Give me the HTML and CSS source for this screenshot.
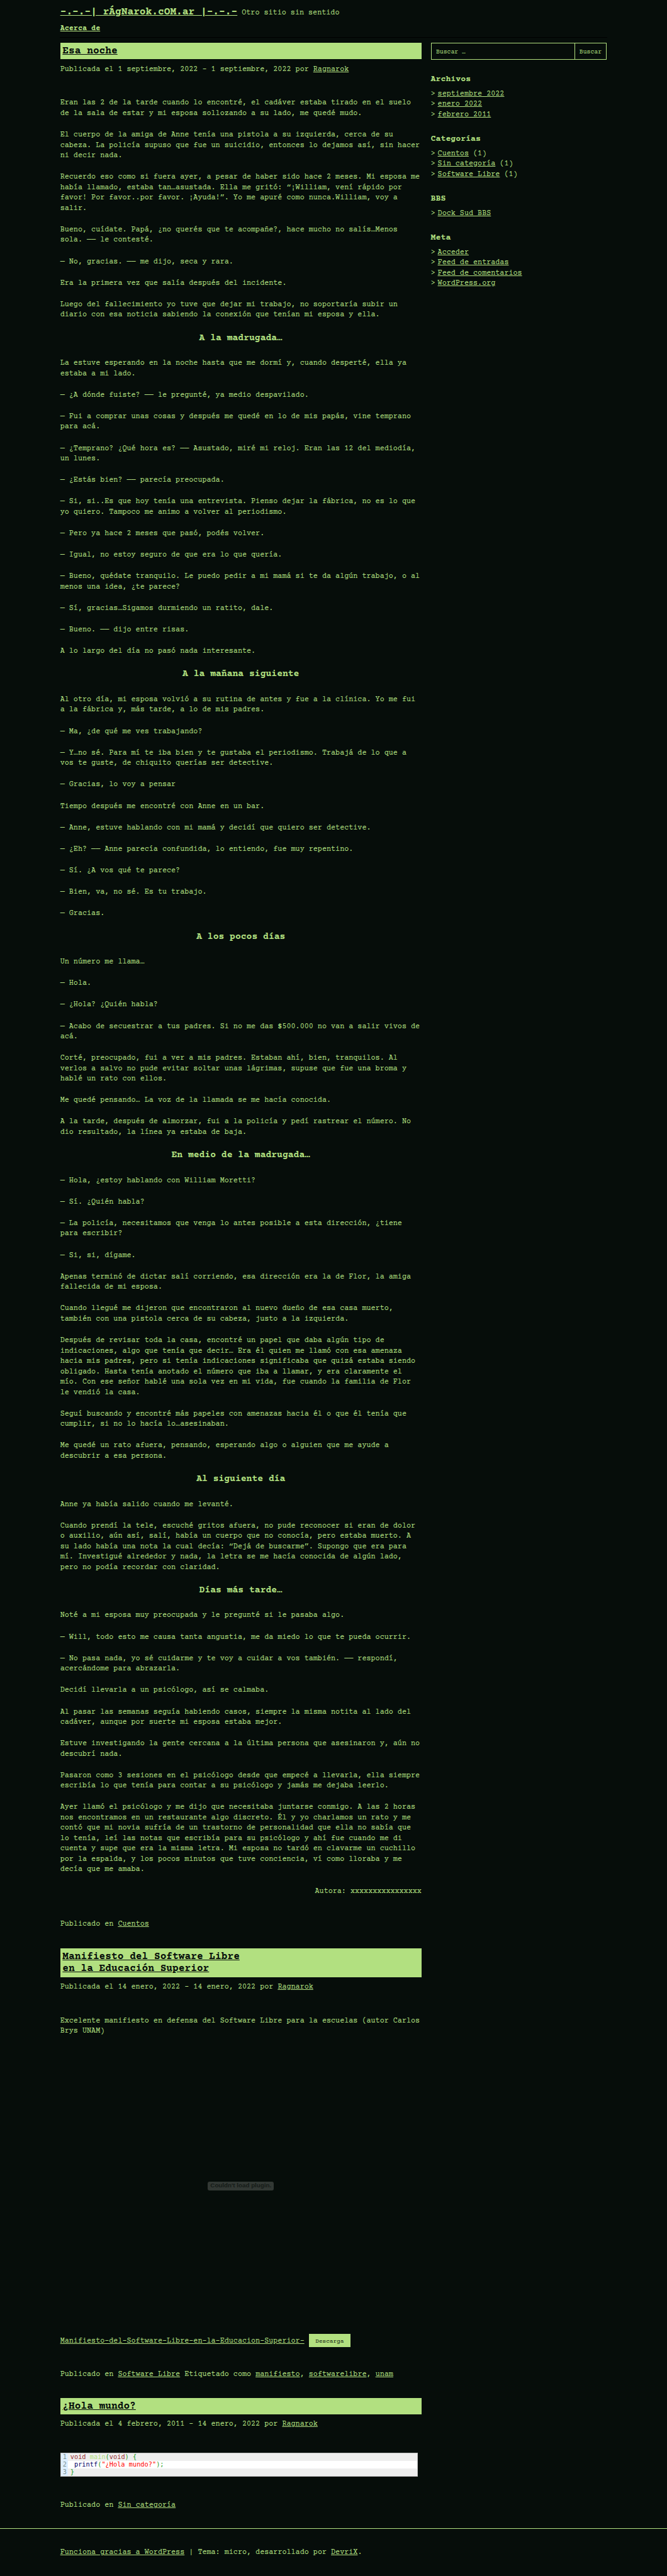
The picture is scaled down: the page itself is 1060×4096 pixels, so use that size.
FILE: index.html
```html
<!DOCTYPE html>
<html lang="es">
<head>
<meta charset="utf-8">
<title>-.-.-| rÁgNarok.cOM.ar |-.-.-</title>
<link rel="stylesheet" href="styles.css">
</head>
<body>
<header class="site-header">
<div class="branding"><a class="site-title" href="#">-.-.-| rÁgNarok.cOM.ar |-.-.-</a> <span>Otro sitio sin sentido</span></div>
<nav class="site-nav"><a href="#">Acerca de</a></nav>
</header>
<div class="site-content">
<main class="posts">
<article class="post">
<h2 class="post-title"><a href="#">Esa noche</a></h2>
<div class="post-meta">Publicada el 1 septiembre, 2022 – 1 septiembre, 2022 por <a href="#">Ragnarok</a></div>
<div class="post-body">
<p>Eran las 2 de la tarde cuando lo encontré, el cadáver estaba tirado en el suelo<br>de la sala de estar y mi esposa sollozando a su lado, me quedé mudo.</p>
<p>El cuerpo de la amiga de Anne tenía una pistola a su izquierda, cerca de su<br>cabeza. La policía supuso que fue un suicidio, entonces lo dejamos así, sin hacer<br>ni decir nada.</p>
<p>Recuerdo eso como si fuera ayer, a pesar de haber sido hace 2 meses. Mi esposa me<br>había llamado, estaba tan…asustada. Ella me gritó: “¡William, vení rápido por<br>favor! Por favor..por favor. ¡Ayuda!”. Yo me apuré como nunca.William, voy a<br>salir.</p>
<p>Bueno, cuídate. Papá, ¿no querés que te acompañe?, hace mucho no salís…Menos<br>sola. —— le contesté.</p>
<p>— No, gracias. —— me dijo, seca y rara.</p>
<p>Era la primera vez que salía después del incidente.</p>
<p>Luego del fallecimiento yo tuve que dejar mi trabajo, no soportaría subir un<br>diario con esa noticia sabiendo la conexión que tenían mi esposa y ella.</p>
<h3>A la madrugada…</h3>
<p>La estuve esperando en la noche hasta que me dormí y, cuando desperté, ella ya<br>estaba a mi lado.</p>
<p>— ¿A dónde fuiste? —— le pregunté, ya medio despavilado.</p>
<p>— Fui a comprar unas cosas y después me quedé en lo de mis papás, vine temprano<br>para acá.</p>
<p>— ¿Temprano? ¿Qué hora es? —— Asustado, miré mi reloj. Eran las 12 del mediodía,<br>un lunes.</p>
<p>— ¿Estás bien? —— parecía preocupada.</p>
<p>— Si, si..Es que hoy tenía una entrevista. Pienso dejar la fábrica, no es lo que<br>yo quiero. Tampoco me animo a volver al periodismo.</p>
<p>— Pero ya hace 2 meses que pasó, podés volver.</p>
<p>— Igual, no estoy seguro de que era lo que quería.</p>
<p>— Bueno, quédate tranquilo. Le puedo pedir a mi mamá si te da algún trabajo, o al<br>menos una idea, ¿te parece?</p>
<p>— Sí, gracias…Sigamos durmiendo un ratito, dale.</p>
<p>— Bueno. —— dijo entre risas.</p>
<p>A lo largo del día no pasó nada interesante.</p>
<h3>A la mañana siguiente</h3>
<p>Al otro día, mi esposa volvió a su rutina de antes y fue a la clínica. Yo me fui<br>a la fábrica y, más tarde, a lo de mis padres.</p>
<p>— Ma, ¿de qué me ves trabajando?</p>
<p>— Y…no sé. Para mí te iba bien y te gustaba el periodismo. Trabajá de lo que a<br>vos te guste, de chiquito querías ser detective.</p>
<p>— Gracias, lo voy a pensar</p>
<p>Tiempo después me encontré con Anne en un bar.</p>
<p>— Anne, estuve hablando con mi mamá y decidí que quiero ser detective.</p>
<p>— ¿Eh? —— Anne parecía confundida, lo entiendo, fue muy repentino.</p>
<p>— Sí. ¿A vos qué te parece?</p>
<p>— Bien, va, no sé. Es tu trabajo.</p>
<p>— Gracias.</p>
<h3>A los pocos días</h3>
<p>Un número me llama…</p>
<p>— Hola.</p>
<p>— ¿Hola? ¿Quién habla?</p>
<p>— Acabo de secuestrar a tus padres. Si no me das $500.000 no van a salir vivos de<br>acá.</p>
<p>Corté, preocupado, fui a ver a mis padres. Estaban ahí, bien, tranquilos. Al<br>verlos a salvo no pude evitar soltar unas lágrimas, supuse que fue una broma y<br>hablé un rato con ellos.</p>
<p>Me quedé pensando… La voz de la llamada se me hacía conocida.</p>
<p>A la tarde, después de almorzar, fui a la policía y pedí rastrear el número. No<br>dio resultado, la línea ya estaba de baja.</p>
<h3>En medio de la madrugada…</h3>
<p>— Hola, ¿estoy hablando con William Moretti?</p>
<p>— Sí. ¿Quién habla?</p>
<p>— La policía, necesitamos que venga lo antes posible a esta dirección, ¿tiene<br>para escribir?</p>
<p>— Si, si, dígame.</p>
<p>Apenas terminó de dictar salí corriendo, esa dirección era la de Flor, la amiga<br>fallecida de mi esposa.</p>
<p>Cuando llegué me dijeron que encontraron al nuevo dueño de esa casa muerto,<br>también con una pistola cerca de su cabeza, justo a la izquierda.</p>
<p>Después de revisar toda la casa, encontré un papel que daba algún tipo de<br>indicaciones, algo que tenía que decir… Era él quien me llamó con esa amenaza<br>hacia mis padres, pero si tenía indicaciones significaba que quizá estaba siendo<br>obligado. Hasta tenía anotado el número que iba a llamar, y era claramente el<br>mío. Con ese señor hablé una sola vez en mi vida, fue cuando la familia de Flor<br>le vendió la casa.</p>
<p>Seguí buscando y encontré más papeles con amenazas hacia él o que él tenía que<br>cumplir, si no lo hacía lo…asesinaban.</p>
<p>Me quedé un rato afuera, pensando, esperando algo o alguien que me ayude a<br>descubrir a esa persona.</p>
<h3>Al siguiente día</h3>
<p>Anne ya había salido cuando me levanté.</p>
<p>Cuando prendí la tele, escuché gritos afuera, no pude reconocer si eran de dolor<br>o auxilio, aún así, salí, había un cuerpo que no conocía, pero estaba muerto. A<br>su lado había una nota la cual decía: “Dejá de buscarme”. Supongo que era para<br>mí. Investigué alrededor y nada, la letra se me hacía conocida de algún lado,<br>pero no podía recordar con claridad.</p>
<h3>Días más tarde…</h3>
<p>Noté a mi esposa muy preocupada y le pregunté si le pasaba algo.</p>
<p>— Will, todo esto me causa tanta angustia, me da miedo lo que te pueda ocurrir.</p>
<p>— No pasa nada, yo sé cuidarme y te voy a cuidar a vos también. —— respondí,<br>acercándome para abrazarla.</p>
<p>Decidí llevarla a un psicólogo, así se calmaba.</p>
<p>Al pasar las semanas seguía habiendo casos, siempre la misma notita al lado del<br>cadáver, aunque por suerte mi esposa estaba mejor.</p>
<p>Estuve investigando la gente cercana a la última persona que asesinaron y, aún no<br>descubrí nada.</p>
<p>Pasaron como 3 sesiones en el psicólogo desde que empecé a llevarla, ella siempre<br>escribía lo que tenía para contar a su psicólogo y jamás me dejaba leerlo.</p>
<p>Ayer llamó el psicólogo y me dijo que necesitaba juntarse conmigo. A las 2 horas<br>nos encontramos en un restaurante algo discreto. Él y yo charlamos un rato y me<br>contó que mi novia sufría de un trastorno de personalidad que ella no sabía que<br>lo tenía, leí las notas que escribía para su psicólogo y ahí fue cuando me di<br>cuenta y supe que era la misma letra. Mi esposa no tardó en clavarme un cuchillo<br>por la espalda, y los pocos minutos que tuve conciencia, ví como lloraba y me<br>decía que me amaba.</p>
<p class="author">Autora: xxxxxxxxxxxxxxxx</p>
</div>
<footer class="post-footer">Publicado en <a href="#">Cuentos</a></footer>
</article>
<article class="post">
<h2 class="post-title"><a href="#">Manifiesto del Software Libre<br>en la Educación Superior</a></h2>
<div class="post-meta">Publicada el 14 enero, 2022 – 14 enero, 2022 por <a href="#">Ragnarok</a></div>
<div class="post-body">
<p>Excelente manifiesto en defensa del Software Libre para la escuelas (autor Carlos<br>Brys UNAM)</p>
<div class="file">
<div class="file-embed"><span>Couldn't load plugin.</span></div>
<div class="file-row"><a class="file-name" href="#">Manifiesto-del-Software-Libre-en-la-Educacion-Superior-</a><a class="file-button" href="#">Descarga</a></div>
</div>
</div>
<footer class="post-footer">Publicado en <a href="#">Software Libre</a> Etiquetado como <a href="#">manifiesto</a>, <a href="#">softwarelibre</a>, <a href="#">unam</a></footer>
</article>
<article class="post">
<h2 class="post-title"><a href="#">¿Hola mundo?</a></h2>
<div class="post-meta">Publicada el 4 febrero, 2011 – 14 enero, 2022 por <a href="#">Ragnarok</a></div>
<div class="post-body">
<div class="code">
<div class="code-row"><span class="num">1</span><code><span class="type">void</span> <span class="fn">main</span><i>(</i><span class="type">void</span><i>)</i> <i>{</i></code></div>
<div class="code-row"><span class="num">2</span><code> <span class="call">printf</span><i>(</i><span class="str">"¿Hola mundo?"</span><i>);</i></code></div>
<div class="code-row"><span class="num">3</span><code><i>}</i></code></div>
</div>
</div>
<footer class="post-footer">Publicado en <a href="#">Sin categoría</a></footer>
</article>
</main>
<aside class="sidebar">
<form class="search"><input type="text" placeholder="Buscar …"><button type="button">Buscar</button></form>
<section class="widget"><h4>Archivos</h4><ul><li><a href="#">septiembre 2022</a></li><li><a href="#">enero 2022</a></li><li><a href="#">febrero 2011</a></li></ul></section>
<section class="widget"><h4>Categorías</h4><ul><li><a href="#">Cuentos</a> (1)</li><li><a href="#">Sin categoría</a> (1)</li><li><a href="#">Software Libre</a> (1)</li></ul></section>
<section class="widget"><h4>BBS</h4><ul><li><a href="#">Dock Sud BBS</a></li></ul></section>
<section class="widget"><h4>Meta</h4><ul><li><a href="#">Acceder</a></li><li><a href="#">Feed de entradas</a></li><li><a href="#">Feed de comentarios</a></li><li><a href="#">WordPress.org</a></li></ul></section>
</aside>
</div>
<footer class="site-footer"><div><a href="#">Funciona gracias a WordPress</a> | Tema: micro, desarrollado por <a href="#">DevriX</a>.</div></footer>
</body>
</html>
```
FILE: styles.css
```css
/* --u is one design pixel of the 1440-wide layout */
:root { --u: calc(100vw / 1440); --green: #b2e080; --bg: #060d0a; }
* { box-sizing: border-box; }
body {
  margin: 0;
  background: var(--bg);
  color: var(--green);
  font-family: "Courier Prime", "Liberation Mono", monospace;
  font-size: calc(16 * var(--u));
  line-height: 1.4;
}
a { color: inherit; text-decoration: underline; }
h2, h3, h4, p, ul { margin: 0; padding: 0; }

.site-header {
  width: calc(1182 * var(--u));
  height: calc(82 * var(--u));
  margin: 0 auto;
  padding: calc(12.3 * var(--u)) calc(1 * var(--u)) 0;
  border-bottom: 1px solid #000;
}
.branding { line-height: calc(30.8 * var(--u)); white-space: nowrap; }
.site-title { font-size: calc(22 * var(--u)); font-weight: bold; }
.site-nav { margin-top: calc(6.5 * var(--u)); font-weight: bold; }

.site-content {
  display: flex;
  gap: calc(20 * var(--u));
  width: calc(1180 * var(--u));
  height: calc(5379.5 * var(--u));
  margin: 0 auto;
  padding-top: calc(10 * var(--u));
}
.posts { width: calc(780 * var(--u)); }
.post-title {
  padding: calc(5.8 * var(--u)) calc(5 * var(--u)) calc(4.2 * var(--u));
  background: var(--green);
  color: var(--bg);
  font-size: calc(22 * var(--u));
  line-height: 1.2;
}
.post-meta { margin-top: calc(11 * var(--u)); white-space: nowrap; }
.post-body { display: flow-root; padding-top: calc(50.8 * var(--u)); }
.post-body p { margin-bottom: calc(24 * var(--u)); line-height: 1.4015; white-space: nowrap; }
.post-body h3 {
  margin-bottom: calc(29.8 * var(--u));
  font-size: calc(20 * var(--u));
  text-align: center;
}
.post-body .author { text-align: right; }
.post-footer { margin: calc(25.4 * var(--u)) 0 calc(38.8 * var(--u)); white-space: nowrap; }

.file { margin-bottom: calc(22.4 * var(--u)); }
.file-embed {
  display: flex;
  align-items: center;
  justify-content: center;
  height: calc(597 * var(--u));
}
.file-embed span {
  width: calc(143 * var(--u));
  height: calc(18 * var(--u));
  border-radius: calc(4 * var(--u));
  background: #323834;
  color: #151b17;
  font: bold calc(13.3 * var(--u)) / calc(17.5 * var(--u)) "Liberation Sans", sans-serif;
  text-align: center;
  white-space: nowrap;
}
.file-row { display: flex; align-items: center; height: calc(29 * var(--u)); margin-top: calc(20.8 * var(--u)); }
.file-name { padding-top: calc(3.6 * var(--u)); }
.file-button {
  width: calc(89 * var(--u));
  margin-left: calc(10 * var(--u));
  padding-top: calc(4 * var(--u));
  background: var(--green);
  color: var(--bg);
  font-size: calc(12.8 * var(--u));
  line-height: calc(25 * var(--u));
  text-align: center;
  text-decoration: none;
}

.code {
  width: calc(772 * var(--u));
  margin: calc(-1.2 * var(--u)) 0 calc(27 * var(--u));
  border: 1px solid #c0c0c0;
  background: #eee;
  font: calc(14 * var(--u)) / calc(16 * var(--u)) "DejaVu Sans Mono", monospace;
}
.code-row { display: flex; height: calc(16 * var(--u)); }
.code-row:nth-child(2) { background: #fff; }
.code code { font: inherit; color: #000; white-space: pre; }
.code i { color: #1a9a1a; font-style: normal; }
.num { width: calc(16 * var(--u)); margin-right: calc(4.5 * var(--u)); padding-left: calc(4 * var(--u)); background: #def; color: #7c9494; }
.type { color: #933; }
.fn { color: var(--green); }
.call { color: #006; }
.str { color: #f00; }

.sidebar { width: calc(380 * var(--u)); }
.search {
  display: flex;
  height: calc(37 * var(--u));
  margin-bottom: calc(31 * var(--u));
  border: 1px solid var(--green);
}
.search input, .search button {
  border: 0;
  background: none;
  color: var(--green);
  font: calc(13.333 * var(--u)) "Courier Prime", "Liberation Mono", monospace;
}
.search input { flex: 1; min-width: 0; padding: calc(3 * var(--u)) calc(10 * var(--u)) 0; }
.search input::placeholder { color: var(--green); opacity: 1; }
.search button { width: calc(69 * var(--u)); padding: calc(3 * var(--u)) 0 0; border-left: 1px solid var(--green); }
.widget { margin-bottom: calc(29.1 * var(--u)); }
.widget h4 { margin-bottom: calc(7.5 * var(--u)); font-size: calc(18 * var(--u)); }
.widget ul { list-style: none; }
.widget li { display: flex; white-space: pre; }
.widget li::before { content: ">"; width: calc(15 * var(--u)); }

.site-footer { height: calc(101.5 * var(--u)); padding-top: calc(41 * var(--u)); border-top: 1px solid var(--green); }
.site-footer div { width: calc(1180 * var(--u)); margin: 0 auto; white-space: nowrap; }
```
